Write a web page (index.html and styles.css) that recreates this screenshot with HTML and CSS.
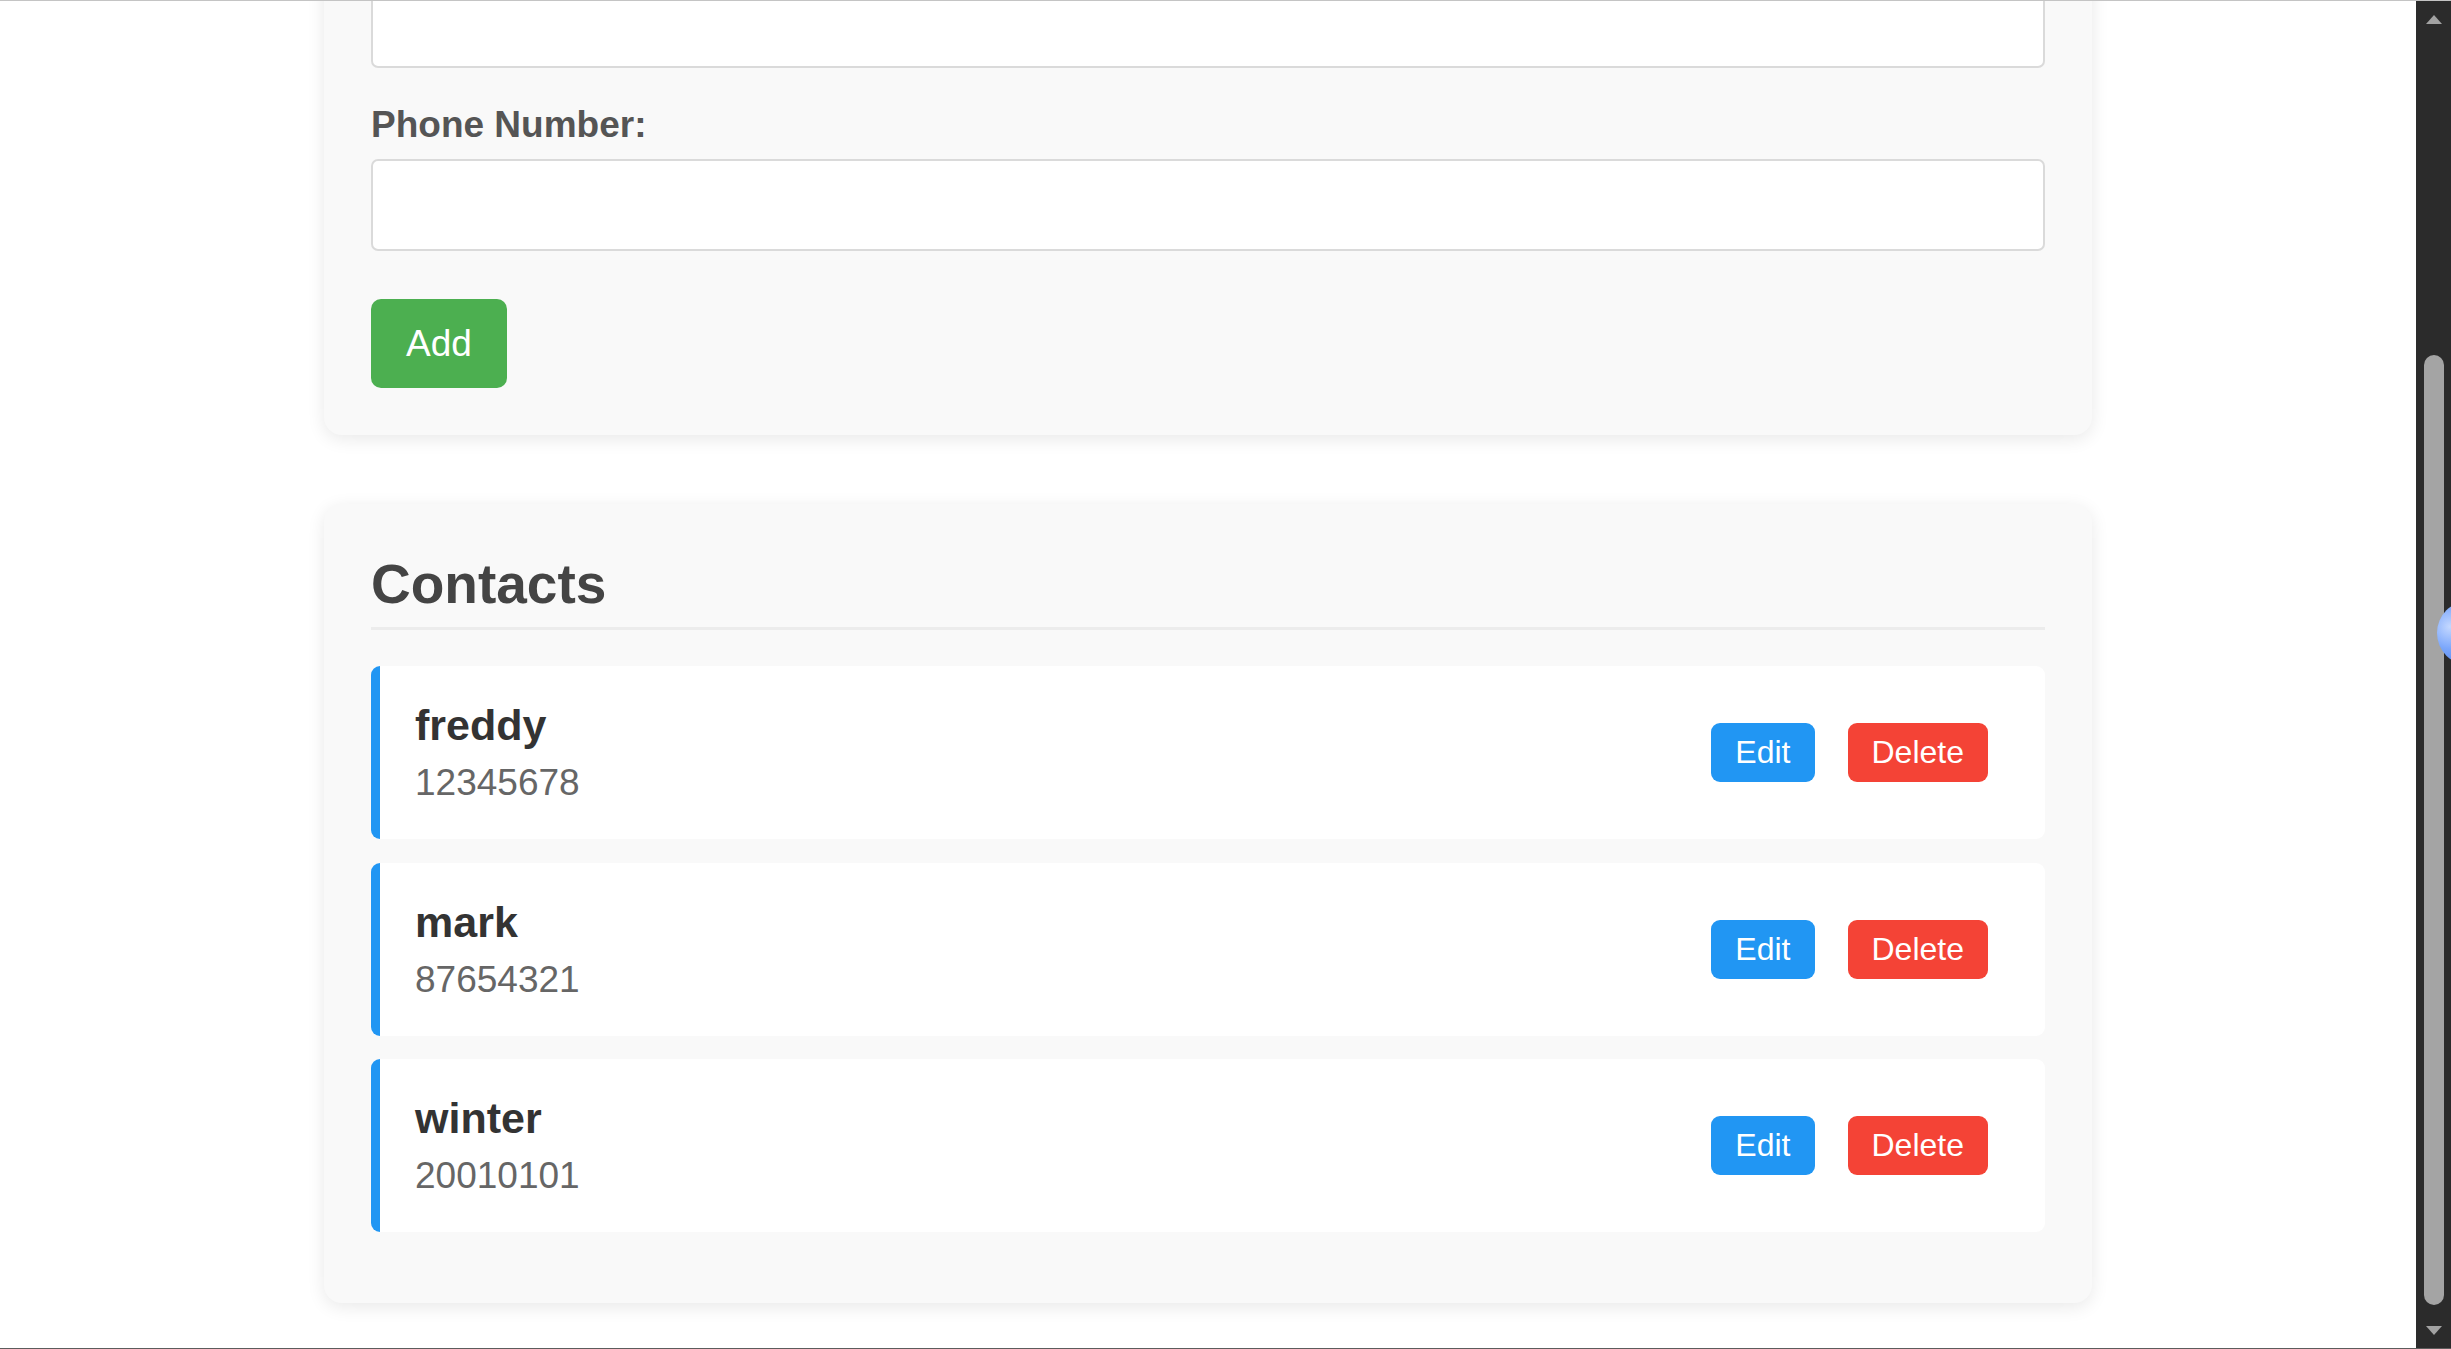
FILE: index.html
```html
<!DOCTYPE html>
<html lang="en">
<head>
<meta charset="utf-8">
<title>Contact Manager</title>
<link rel="stylesheet" href="styles.css">
</head>
<body>
<div class="screen">
  <div class="viewport">
    <main class="container">
      <section class="card form-card">
        <div class="form-group">
          <input class="field-input" id="name" type="text" aria-label="Name">
        </div>
        <div class="form-group">
          <label class="field-label" for="phone">Phone Number:</label>
          <input class="field-input" id="phone" type="text">
        </div>
        <button class="btn btn-add" type="button">Add</button>
      </section>

      <section class="card list-card">
        <h2 class="list-title">Contacts</h2>
        <ul class="contact-list">
          <li class="contact">
            <div class="contact-info">
              <div class="contact-name">freddy</div>
              <div class="contact-phone">12345678</div>
            </div>
            <div class="contact-actions">
              <button class="btn btn-small btn-edit" type="button">Edit</button>
              <button class="btn btn-small btn-delete" type="button">Delete</button>
            </div>
          </li>
          <li class="contact">
            <div class="contact-info">
              <div class="contact-name">mark</div>
              <div class="contact-phone">87654321</div>
            </div>
            <div class="contact-actions">
              <button class="btn btn-small btn-edit" type="button">Edit</button>
              <button class="btn btn-small btn-delete" type="button">Delete</button>
            </div>
          </li>
          <li class="contact">
            <div class="contact-info">
              <div class="contact-name">winter</div>
              <div class="contact-phone">20010101</div>
            </div>
            <div class="contact-actions">
              <button class="btn btn-small btn-edit" type="button">Edit</button>
              <button class="btn btn-small btn-delete" type="button">Delete</button>
            </div>
          </li>
        </ul>
      </section>
    </main>
  </div>

  <div class="scrollbar">
    <div class="sb-arrow">
      <svg width="16" height="9" viewBox="0 0 16 9"><path d="M8 0 L16 9 L0 9 Z" fill="#a2a2a2"/></svg>
    </div>
    <div class="sb-track">
      <div class="sb-thumb"></div>
    </div>
    <div class="sb-arrow">
      <svg width="16" height="9" viewBox="0 0 16 9"><path d="M0 0 L16 0 L8 9 Z" fill="#a2a2a2"/></svg>
    </div>
  </div>

  <div class="float-blob"></div>
</div>
</body>
</html>
```

FILE: styles.css
```css
html, body {
  margin: 0;
  padding: 0;
  background: #ffffff;
}

body {
  font-family: "Liberation Sans", Arial, sans-serif;
  color: #333333;
}

.screen {
  position: relative;
  display: flex;
  height: 1349px;
  box-sizing: border-box;
  border-top: 1px solid #c4c4c4;
  border-bottom: 1px solid #5c5c5c;
  overflow: hidden;
}

.viewport {
  flex: 1;
  overflow: hidden;
  background: #ffffff;
}

.container {
  width: 1768px;
  margin: -72px auto 0;
}

.card {
  background: #f9f9f9;
  border-radius: 18px;
  padding: 47px;
  box-shadow: 0 4px 18px rgba(0, 0, 0, 0.09);
}

.list-card {
  margin-top: 69px;
}

.form-group {
  margin-bottom: 36px;
}

.field-label {
  display: block;
  font-size: 37px;
  line-height: 42px;
  font-weight: bold;
  color: #555555;
  margin-bottom: 13px;
}

.field-input {
  display: block;
  width: 100%;
  height: 92px;
  box-sizing: border-box;
  border: 2px solid #dadada;
  border-radius: 7px;
  background: #ffffff;
  font-family: inherit;
  font-size: 37px;
  padding: 0 23px;
}

.btn {
  border: none;
  color: #ffffff;
  font-family: inherit;
  cursor: pointer;
}

.btn-add {
  display: block;
  margin-top: 48px;
  background: #4caf50;
  font-size: 37px;
  line-height: 43px;
  padding: 23px 35px;
  border-radius: 10px;
}

.list-title {
  margin: 2px 0 36px;
  padding-bottom: 11px;
  border-bottom: 3px solid #ececec;
  font-size: 55px;
  line-height: 63px;
  font-weight: bold;
  color: #444444;
}

.contact-list {
  list-style: none;
  margin: 0;
  padding: 0;
}

.contact {
  display: flex;
  align-items: center;
  justify-content: space-between;
  background: #ffffff;
  border-left: 9px solid #2196f3;
  border-radius: 9px;
  padding: 35px 57px 35px 35px;
  margin-bottom: 23.5px;
}

.contact-name {
  font-size: 43px;
  line-height: 49px;
  font-weight: bold;
  color: #333333;
}

.contact-phone {
  margin-top: 11px;
  font-size: 37px;
  line-height: 43px;
  color: #666666;
}

.contact-actions {
  display: flex;
  gap: 33px;
}

.btn-small {
  font-size: 32px;
  line-height: 35px;
  padding: 12px 24px;
  border-radius: 9px;
}

.btn-edit {
  background: #2196f3;
}

.btn-delete {
  background: #f44336;
}

.scrollbar {
  width: 35px;
  background: #2b2b2b;
  display: flex;
  flex-direction: column;
  align-items: center;
}

.sb-arrow {
  height: 36px;
  display: flex;
  align-items: center;
  justify-content: center;
}

.sb-track {
  flex: 1;
  padding-top: 318px;
}

.sb-thumb {
  width: 20px;
  height: 950px;
  border-radius: 10px;
  background: #a4a4a4;
}

.float-blob {
  position: absolute;
  right: -50px;
  top: 600px;
  width: 64px;
  height: 64px;
  border-radius: 50%;
  background: radial-gradient(circle at 20% 40%, #c4d8ff 0%, #7aa6fb 35%, #4a80ee 75%, #3a6fe0 100%);
}
```
